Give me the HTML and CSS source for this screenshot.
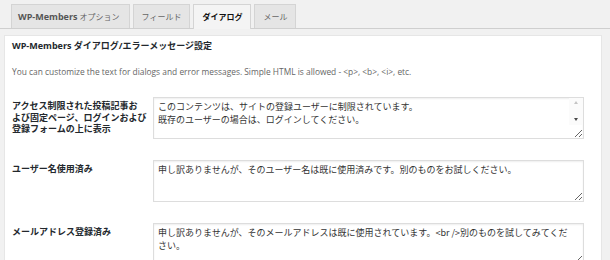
FILE: index.html
```html
<!DOCTYPE html>
<html lang="ja">
<head>
<meta charset="utf-8">
<title>WP-Members ダイアログ</title>
<link rel="stylesheet" href="styles.css">
</head>
<body>
<nav class="tabs">
  <a class="tab"><b>WP-Members</b> オプション</a>
  <a class="tab">フィールド</a>
  <a class="tab active">ダイアログ</a>
  <a class="tab">メール</a>
</nav>
<div class="panel">
  <h2 class="title">WP-Members ダイアログ/エラーメッセージ設定</h2>
  <p class="desc">You can customize the text for dialogs and error messages. Simple HTML is allowed - &lt;p&gt;, &lt;b&gt;, &lt;i&gt;, etc.</p>
  <div class="rows">
    <label class="label" for="t1">アクセス制限された投稿記事お<br>よび固定ページ、ログインおよび<br>登録フォームの上に表示</label>
    <div class="field-wrap">
      <textarea id="t1" class="field scroll">このコンテンツは、サイトの登録ユーザーに制限されています。
既存のユーザーの場合は、ログインしてください。

</textarea>
      <div class="scrollbar" aria-hidden="true">
        <span class="arrow up"></span>
        <span class="arrow down"></span>
      </div>
    </div>
    <label class="label" for="t2">ユーザー名使用済み</label>
    <div class="field-wrap">
      <textarea id="t2" class="field">申し訳ありませんが、そのユーザー名は既に使用済みです。別のものをお試しください。</textarea>
    </div>
    <label class="label" for="t3">メールアドレス登録済み</label>
    <div class="field-wrap">
      <textarea id="t3" class="field narrow">申し訳ありませんが、そのメールアドレスは既に使用されています。&lt;br /&gt;別のものを試してみてください。</textarea>
    </div>
  </div>
</div>
</body>
</html>
```

FILE: styles.css
```css
body {
  margin: 0;
  background: #f1f1f1;
  font-family: "Open Sans", "Noto Sans CJK JP", sans-serif;
  color: #23282d;
}

.tabs {
  display: flex;
  gap: 3px;
  height: 24px;
  padding: 4px 0 0 11px;
  border-bottom: 1px solid #cfcfcf;
}

.tab {
  display: block;
  height: 23px;
  padding: 0 8px;
  border: 1px solid #d4d4d4;
  border-bottom: none;
  background: #e5e5e5;
  color: #666;
  font-size: 8px;
  line-height: 23px;
  font-weight: 400;
}

.tab:first-child {
  padding: 0 9px 0 6px;
}

.tab b {
  font-weight: 700;
  font-size: 9px;
  color: #555;
}

.tab.active {
  height: 24px;
  margin-bottom: -1px;
  background: #f4f4f4;
  color: #111;
  font-weight: 700;
}

.panel {
  margin: 6px 8px 0 4px;
  padding: 3px 17px 40px 7px;
  background: #fff;
  border: 1px solid #e6e6e6;
}

.title {
  margin: 0;
  font-size: 9px;
  line-height: 14px;
  font-weight: 700;
  color: #23282d;
}

.desc {
  margin: 12px 0 0;
  font-size: 8.4px;
  line-height: 14px;
  color: #666;
}

.rows {
  display: grid;
  grid-template-columns: 141px 431px;
  row-gap: 21px;
  margin-top: 18px;
}

.label {
  padding-top: 3px;
  font-size: 9px;
  line-height: 11.5px;
  font-weight: 700;
  color: #23282d;
}

.field-wrap {
  position: relative;
}

.field {
  display: block;
  box-sizing: border-box;
  width: 431px;
  height: 42px;
  margin: 0;
  padding: 2px 14px 2px 4px;
  border: 1px solid #dddddd;
  box-shadow: inset 0 1px 2px rgba(0, 0, 0, 0.07);
  font-family: "Noto Sans CJK JP", sans-serif;
  font-size: 9px;
  line-height: 13px;
  color: #333;
  resize: vertical;
  overflow: hidden;
}

.field.scroll {
  padding-right: 20px;
}

.field.narrow {
  padding-right: 13px;
}

.scrollbar {
  position: absolute;
  top: 1px;
  right: 1px;
  width: 14px;
  height: 27px;
  background: #fbfbfb;
}

.arrow {
  position: absolute;
  left: 5px;
  width: 0;
  height: 0;
  border-left: 2.5px solid transparent;
  border-right: 2.5px solid transparent;
}

.arrow.up {
  top: 3px;
  border-bottom: 3px solid #c4c4c4;
}

.arrow.down {
  top: 20px;
  border-top: 3px solid #4a4a4a;
}
```
